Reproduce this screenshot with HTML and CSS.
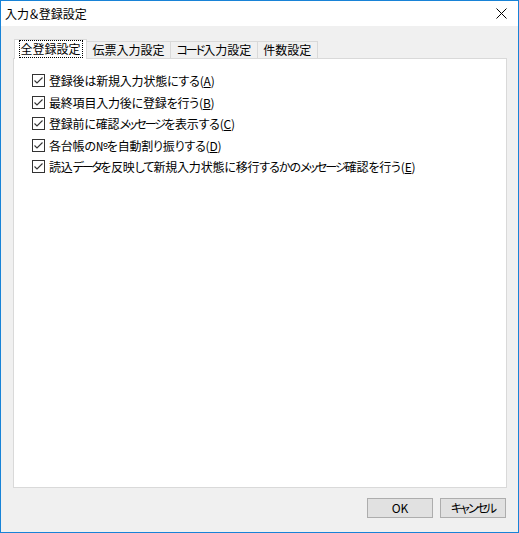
FILE: index.html
```html
<!DOCTYPE html>
<html lang="ja">
<head>
<meta charset="utf-8">
<title>入力＆登録設定</title>
<link rel="stylesheet" href="styles.css">
</head>
<body>
<div class="window">
  <div class="titlebar">
    <span class="title">入力＆登録設定</span>
    <span class="close">
      <svg width="11" height="11" viewBox="0 0 11 11"><path d="M0.5 0.5 L10.5 10.5 M10.5 0.5 L0.5 10.5" stroke="#000" stroke-width="1" fill="none"/></svg>
    </span>
  </div>
  <div class="body">
    <div class="tabs">
      <div class="tab active"><span class="focus">全登録設定</span></div>
      <div class="tab">伝票入力設定</div>
      <div class="tab"><span class="kt">コード</span>入力設定</div>
      <div class="tab">件数設定</div>
    </div>
    <div class="panel">
      <label class="row"><span class="cb"><svg width="11" height="11" viewBox="0 0 11 11"><path d="M1.5 5.5 L4 8 L9.5 2.5" stroke="#333" stroke-width="1.1" fill="none"/></svg></span><span class="lbl">登録後は新規入力状態にする(<u>A</u>)</span></label>
      <label class="row"><span class="cb"><svg width="11" height="11" viewBox="0 0 11 11"><path d="M1.5 5.5 L4 8 L9.5 2.5" stroke="#333" stroke-width="1.1" fill="none"/></svg></span><span class="lbl">最終項目入力後に登録を行う(<u>B</u>)</span></label>
      <label class="row"><span class="cb"><svg width="11" height="11" viewBox="0 0 11 11"><path d="M1.5 5.5 L4 8 L9.5 2.5" stroke="#333" stroke-width="1.1" fill="none"/></svg></span><span class="lbl">登録前に確認<span class="kt">メッセージ</span>を表示する(<u>C</u>)</span></label>
      <label class="row"><span class="cb"><svg width="11" height="11" viewBox="0 0 11 11"><path d="M1.5 5.5 L4 8 L9.5 2.5" stroke="#333" stroke-width="1.1" fill="none"/></svg></span><span class="lbl">各台帳の<span class="no">№</span>を自動割り振りする(<u>D</u>)</span></label>
      <label class="row"><span class="cb"><svg width="11" height="11" viewBox="0 0 11 11"><path d="M1.5 5.5 L4 8 L9.5 2.5" stroke="#333" stroke-width="1.1" fill="none"/></svg></span><span class="lbl">読込<span class="kt">データ</span>を反映<span class="hk">して</span>新規入力状態に移行<span class="hk">するかの</span><span class="kt">メッセージ</span>確認を行う(<u>E</u>)</span></label>
    </div>
    <div class="buttons">
      <button class="btn">OK</button>
      <button class="btn"><span class="kt">キャンセル</span></button>
    </div>
  </div>
</div>
</body>
</html>
```

FILE: styles.css
```css
* { box-sizing: border-box; }
html, body { margin: 0; padding: 0; }
body {
  width: 519px;
  height: 533px;
  font-family: "Noto Sans CJK JP", "Noto Sans", sans-serif;
  font-size: 12px;
  font-feature-settings: "palt";
  color: #000;
}
.window {
  width: 519px;
  height: 533px;
  border: 1px solid #1883d7;
  background: #f0f0f0;
  display: flex;
  flex-direction: column;
}
.titlebar {
  height: 25px;
  background: #fff;
  display: flex;
  align-items: center;
  justify-content: space-between;
  padding: 0 11px 0 4px;
  flex: none;
}
.title { font-size: 12px; line-height: 1; }
.close { display: flex; }
.body {
  flex: 1;
  display: flex;
  flex-direction: column;
  padding: 14px 11px 0 12px;
}
.tabs {
  display: flex;
  align-items: flex-end;
  height: 18px;
  padding-left: 1px;
  position: relative;
  z-index: 1;
}
.tab {
  height: 17px;
  line-height: 15px;
  padding: 0 5.5px;
  border: 1px solid #d9d9d9;
  border-bottom: none;
  background: #f0f0f0;
  margin-right: -1px;
  white-space: nowrap;
}
.tab.active {
  height: 20px;
  margin-bottom: -1px;
  background: #fff;
  padding: 1px 4.5px 0;
  line-height: 16px;
}
.focus {
  display: inline-block;
  outline: 1px dotted #000;
  padding: 0 1px;
  line-height: 16px;
}
.kt { letter-spacing: -2px; }
.hk { letter-spacing: -1px; }
.no { letter-spacing: -1px; }
.panel {
  height: 430px;
  background: #fff;
  border: 1px solid #d9d9d9;
  padding: 11px 0 0 18px;
}
.row {
  display: flex;
  align-items: center;
  height: 21.5px;
  white-space: nowrap;
}
.lbl { letter-spacing: -0.2px; }
.cb {
  width: 13px;
  height: 13px;
  border: 1px solid #333;
  background: #fff;
  margin-right: 4px;
  display: flex;
  flex: none;
}
u { text-decoration: underline; text-underline-offset: 1px; }
.buttons {
  display: flex;
  justify-content: flex-end;
  gap: 7px;
  padding-top: 10px;
  padding-right: 1px;
}
.btn {
  width: 66px;
  height: 20px;
  background: #e1e1e1;
  border: 1px solid #adadad;
  font-family: inherit;
  font-size: 12px;
  font-feature-settings: "palt";
  padding: 0;
  line-height: 16px;
  color: #000;
}
```
